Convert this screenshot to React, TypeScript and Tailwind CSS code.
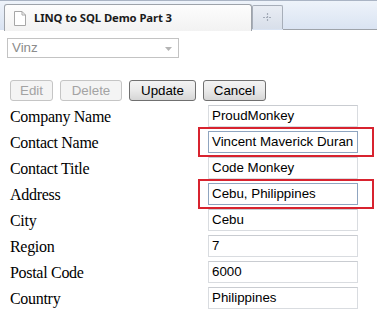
import type { ReactNode } from "react";

const fields = [
  { label: "Company Name", value: "ProudMonkey" },
  { label: "Contact Name", value: "Vincent Maverick Duran", marked: true },
  { label: "Contact Title", value: "Code Monkey" },
  { label: "Address", value: "Cebu, Philippines", marked: true },
  { label: "City", value: "Cebu" },
  { label: "Region", value: "7" },
  { label: "Postal Code", value: "6000" },
  { label: "Country", value: "Philippines" },
];

export default function App() {
  return (
    <div className="h-[330px] w-[377px] overflow-hidden bg-white">
      <TabStrip />

      <div className="px-[7px] pt-[8px]">
        <div className="relative flex h-[20px] w-[172px] items-center border border-[#c3c3c3] bg-white pl-[4px] font-['Liberation_Sans',Arial,sans-serif] text-[13.33px] text-[#8c8c8c]">
          Vinz
          <svg className="absolute right-[6px] top-[8px]" width="7" height="4" viewBox="0 0 7 4">
            <path d="M0 0h7L3.5 4z" fill="#b4b4b4" />
          </svg>
        </div>

        <div className="mt-[22px] flex gap-[7px] pl-[3px]">
          <Btn disabled className="w-[43px]">Edit</Btn>
          <Btn disabled className="w-[62px]">Delete</Btn>
          <Btn className="w-[67px]">Update</Btn>
          <Btn className="w-[63px]">Cancel</Btn>
        </div>

        <div className="mt-[4px] flex flex-col gap-[4px]">
          {fields.map((f) => (
            <div key={f.label} className="flex h-[22px] items-center">
              <div className="h-[22px] w-[201px] pl-[3px] pt-[2px] font-['Liberation_Serif','Times_New_Roman',serif] text-[16px] leading-[20px] tracking-[-0.3px] text-black">
                {f.label}
              </div>
              <div className="relative">
                <div
                  className={`flex h-[22px] w-[150px] items-center border pl-[3px] font-['Liberation_Sans',Arial,sans-serif] text-[13.33px] text-black ${
                    f.marked ? "border-[#8fa5c0]" : "border-[#d9dce0] border-t-[#c9ccd1]"
                  }`}
                >
                  {f.value}
                </div>
                {f.marked && (
                  <span className="pointer-events-none absolute -bottom-[4px] -left-[10px] -right-[16px] -top-[4px] border-2 border-[#d8232f]" />
                )}
              </div>
            </div>
          ))}
        </div>
      </div>
    </div>
  );
}

function TabStrip() {
  return (
    <div className="flex h-[30px] items-end border-t border-[#aab4c4] bg-gradient-to-b from-[#eef3fa] to-[#d9e3f2] pl-[4px]">
      <div className="relative z-10 -mb-px flex h-[27px] w-[248px] items-center gap-[8px] rounded-t-[3px] border border-b-0 border-[#9ea3aa] bg-gradient-to-b from-[#fdfdfd] to-[#f2f2f2] pl-[9px]">
        <PageIcon />
        <span className="font-['Noto_Sans',sans-serif] text-[11.3px] font-bold tracking-[-0.1px] text-[#1b1b1b]">
          LINQ to SQL Demo Part 3
        </span>
      </div>
      <div className="mb-[1px] flex h-[24px] w-[31px] items-center justify-center rounded-t-[2px] border border-b-0 border-[#a7aeb9] bg-gradient-to-b from-[#e9edf4] to-[#d8dfea]">
        <svg width="9" height="9" viewBox="0 0 9 9">
          <path d="M4.5 0v9M0 4.5h9" stroke="#a3abb8" strokeWidth="1.2" strokeDasharray="2 1" />
        </svg>
      </div>
      <div className="h-px flex-1 self-end bg-[#9ea3aa]" />
    </div>
  );
}

function PageIcon() {
  return (
    <svg width="12" height="15" viewBox="0 0 12 15">
      <path d="M0.5 0.5h7.5l3.5 3.5v10.5h-11z" fill="#fff" stroke="#a7a7a7" />
      <path d="M8 0.5v3.5h3.5" fill="none" stroke="#a7a7a7" />
    </svg>
  );
}

function Btn({
  children,
  disabled,
  className,
}: {
  children: ReactNode;
  disabled?: boolean;
  className?: string;
}) {
  return (
    <div
      className={`flex h-[21px] items-center justify-center rounded-[3px] border font-['Liberation_Sans',Arial,sans-serif] text-[13.33px] ${
        disabled
          ? "border-[#c5c5c5] bg-[#f4f4f4] text-[#a3a3a3]"
          : "border-[#707070] bg-gradient-to-b from-[#f3f3f3] via-[#e9e9e9] to-[#d6d6d6] text-black"
      } ${className ?? ""}`}
    >
      {children}
    </div>
  );
}
